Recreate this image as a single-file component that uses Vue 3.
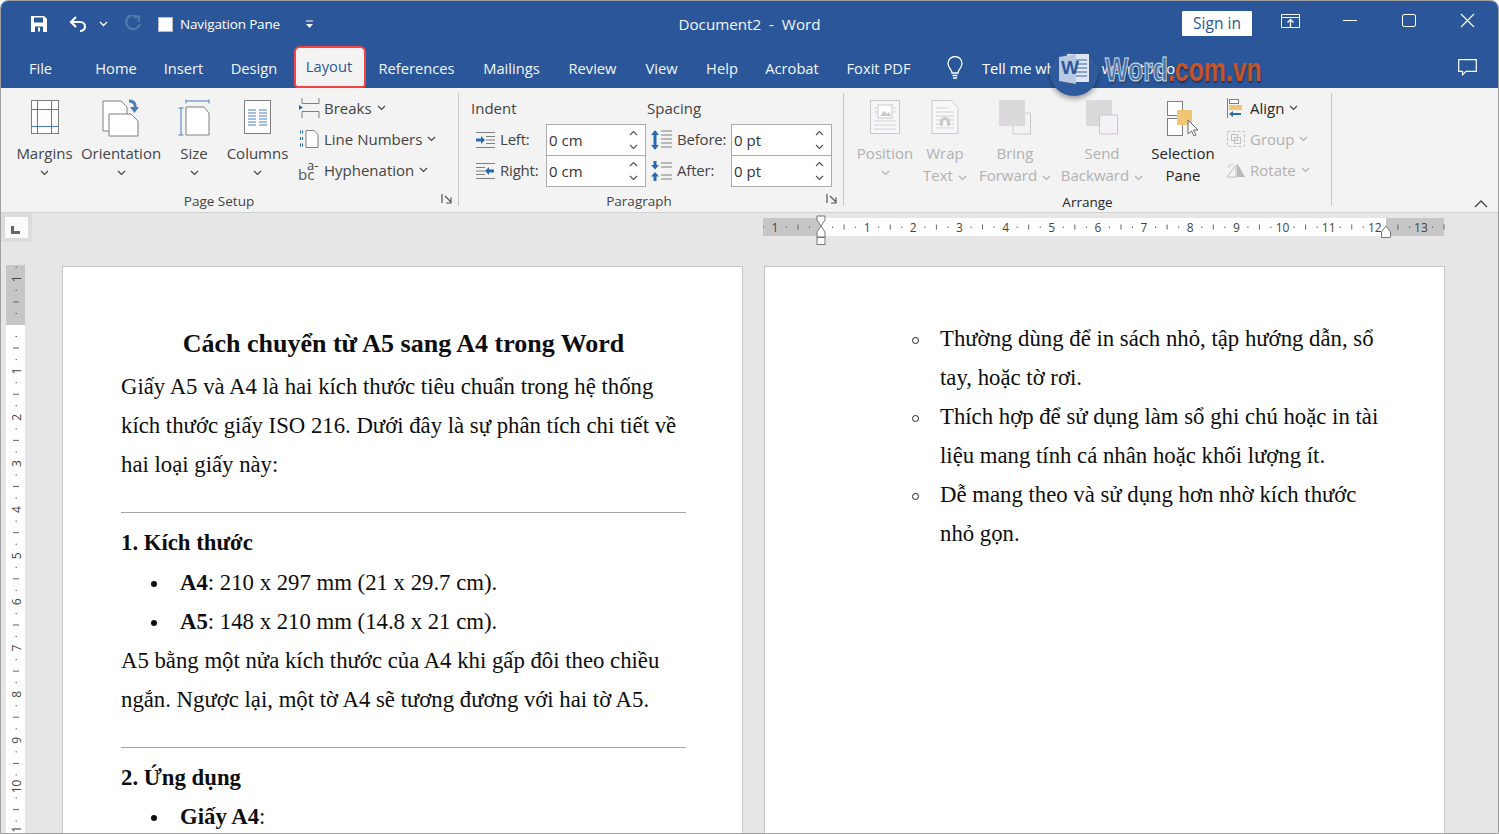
<template>
  <div class="window">
    <header class="titlebar">
      <div class="qat-row">
        <div class="qat">
          <svg class="qat-save" width="18" height="18" viewBox="0 0 18 18"><path d="M1 1h13l3 3v13H1z" fill="#fff"/><rect x="4" y="2.500" width="9" height="5" fill="#2b579a"/><rect x="5" y="11.500" width="8" height="5.500" fill="#2b579a"/><rect x="8" y="12.500" width="2" height="4" fill="#fff"/></svg>
          <svg class="qat-undo" width="20" height="18" viewBox="0 0 20 18"><path d="M8 2 3 7l5 5M3 7h9c3 0 5 2 5 4.500S15 16 12 16" fill="none" stroke="#fff" stroke-width="2.200"/></svg>
          <svg class="qat-chev" width="9" height="6" viewBox="0 0 9 6"><path d="M1 1l3.500 3.500L8 1" fill="none" stroke="#fff" stroke-width="1.300"/></svg>
          <svg class="qat-redo" width="18" height="18" viewBox="0 0 18 18"><path d="M10 2h5v5M14.500 2.500A7 7 0 1 0 16 9" fill="none" stroke="#4f78ad" stroke-width="2.400"/></svg>
          <span class="qat-check"></span>
          <span class="qat-label">Navigation Pane</span>
          <svg class="qat-more" width="9" height="9" viewBox="0 0 9 9"><path d="M1 1h7" stroke="#fff" stroke-width="1"/><path d="M1 4h7L4.500 8z" fill="#fff"/></svg>
        </div>
        <div class="doc-title">Document2&nbsp; -&nbsp; Word</div>
        <div class="win-controls">
          <button class="sign-in">Sign in</button>
          <svg class="ctl-ribbon" width="19" height="14" viewBox="0 0 19 14"><path d="M.5.500h18v13H.5zM.5 3.500h18" fill="none" stroke="#fff"/><path d="M9.500 13V6M6.500 8.500l3-3 3 3" fill="none" stroke="#fff" stroke-width="1.300"/></svg>
          <span class="ctl-min"></span>
          <span class="ctl-max"></span>
          <svg class="ctl-close" width="15" height="15" viewBox="0 0 15 15"><path d="M1 1l13 13M14 1 1 14" stroke="#fff" stroke-width="1.200"/></svg>
        </div>
      </div>
      <nav class="tab-row">
        <span v-for="t in tabs" :key="t.name" class="tab" :class="{ active: t.name === 'Layout' }" :style="{ width: t.w + 'px' }">{{ t.name }}</span>
        <svg class="bulb" width="18" height="24" viewBox="0 0 18 24"><path d="M6 17c0-3-4-5-4-9.500a7 7 0 0 1 14 0C16 12 12 14 12 17z" fill="none" stroke="#fff" stroke-width="1.300"/><path d="M6.500 19.500h5M7 22h4" stroke="#fff" stroke-width="1.500"/></svg>
        <span class="tell-me">Tell me what you want to do</span>
        <svg class="comment" width="19" height="17" viewBox="0 0 19 17"><path d="M.7.700h17.600v11.600H8l-3.500 3.500v-3.500H.7z" fill="none" stroke="#fff" stroke-width="1.200"/></svg>
      </nav>
    </header>

    <!-- logo trang web dan de len anh -->
    <div class="watermark">
      <div class="wm-badge">
        <svg width="32" height="32" viewBox="0 0 32 32"><path d="M9 1h22v28H9z" fill="#dfe6f1"/><path d="M18 7h11M18 11h11M18 15h11M18 19h11M18 23h11" stroke="#6f8fc0" stroke-width="1.600"/><path d="M1 4l17-3v30L1 28z" fill="#b9c9e2"/></svg>
        <span class="wm-w">W</span>
      </div>
      <div class="wm-text"><span class="wm-word">Word</span><span class="wm-com">.com.vn</span></div>
    </div>

    <section class="ribbon">
      <div class="group group-page">
        <div class="group-body">
          <div class="big b-margins">
            <div class="big-icon">
              <svg width="28" height="36" viewBox="0 0 28 36"><rect x=".5" y="1.500" width="27" height="33" fill="#fff" stroke="#7f7f7f"/><path d="M6.500 2v32M20.500 2v32M1 10.500h26M1 27.500h26" stroke="#4a7ebb"/></svg>
            </div>
            <span>Margins</span>
            <svg class="chev low" viewBox="0 0 9 6"><path d="M1 1l3.500 3.500L8 1"/></svg>
          </div>
          <div class="big b-orient">
            <div class="big-icon">
              <svg width="38" height="38" viewBox="0 0 38 38"><path d="M1 2h18l6 6v24H1z" fill="#fff" stroke="#7f7f7f"/><path d="M7 15h22l7 7v15H7z" fill="#fff" stroke="#7f7f7f"/><path d="M27 2c5 0 7 3 6 8" fill="none" stroke="#4a7ebb" stroke-width="3"/><path d="M28 8h9l-4.500 6z" fill="#4a7ebb"/></svg>
            </div>
            <span>Orientation</span>
            <svg class="chev low" viewBox="0 0 9 6"><path d="M1 1l3.500 3.500L8 1"/></svg>
          </div>
          <div class="big b-size">
            <div class="big-icon">
              <svg width="32" height="38" viewBox="0 0 32 38"><path d="M8 8h18l5 6v22H8z" fill="#fff" stroke="#7f7f7f"/><path d="M8 2h23M8 .5v4M31 .5v4M3 9v27M.5 9h5M.5 36h5" stroke="#4a7ebb" fill="none"/></svg>
            </div>
            <span>Size</span>
            <svg class="chev low" viewBox="0 0 9 6"><path d="M1 1l3.500 3.500L8 1"/></svg>
          </div>
          <div class="big b-cols">
            <div class="big-icon">
              <svg width="27" height="36" viewBox="0 0 27 36"><rect x=".5" y="1.500" width="26" height="33" fill="#fff" stroke="#7f7f7f"/><path d="M4 11h8M15 11h8M4 14h8M15 14h8M4 17h8M15 17h8M4 20h8M15 20h8M4 23h8M15 23h8M4 26h8M15 26h8" stroke="#4a7ebb"/></svg>
            </div>
            <span>Columns</span>
            <svg class="chev low" viewBox="0 0 9 6"><path d="M1 1l3.500 3.500L8 1"/></svg>
          </div>
          <div class="small-col page-small">
            <div class="small">
              <svg class="small-icon" width="22" height="20" viewBox="0 0 22 20"><path d="M4 0v5.500h17V0M4 20v-6.500h17V20" fill="none" stroke="#7f7f7f"/><path d="M1 7l4 2.500L1 12z" fill="#2b6cb0"/></svg>
              <span>Breaks</span>
              <svg class="chev" viewBox="0 0 9 6"><path d="M1 1l3.500 3.500L8 1"/></svg>
            </div>
            <div class="small">
              <svg class="small-icon" width="22" height="20" viewBox="0 0 22 20"><path d="M8 1.500h8l4 4v13H8z" fill="#fff" stroke="#7f7f7f"/><path d="M2 3h3M2 9.500h3M2 16h3" stroke="#2b6cb0" stroke-width="3" stroke-dasharray="1 1"/></svg>
              <span>Line Numbers</span>
              <svg class="chev" viewBox="0 0 9 6"><path d="M1 1l3.500 3.500L8 1"/></svg>
            </div>
            <div class="small">
              <span class="hyph-icon"><i>a-</i><b>bc</b></span>
              <span>Hyphenation</span>
              <svg class="chev" viewBox="0 0 9 6"><path d="M1 1l3.500 3.500L8 1"/></svg>
            </div>
          </div>
        </div>
        <div class="group-label">Page Setup</div>
        <svg class="launcher" width="12" height="12" viewBox="0 0 12 12"><path d="M1 1v9M4 3l6 6M10 4.500V10H5" fill="none" stroke="#555" stroke-width="1.200"/></svg>
      </div>

      <div class="group group-para">
        <div class="group-body para">
          <div class="para-col col-indent">
            <div class="para-head">Indent</div>
            <div class="spin-row">
              <svg width="20" height="16" viewBox="0 0 20 16"><path d="M1 .500h19M11 4.500h9M11 8h9M11 11.500h9M1 15.500h19" stroke="#7f7f7f"/><path d="M1 6.500h5V4l4 4-4 4V9.500H1z" fill="#2b6cb0"/></svg>
              <label>Left:</label>
              <div class="spin">0 cm<span class="spin-btns"><svg viewBox="0 0 9 6"><path d="M1 5l3.500-3.500L8 5"/></svg><svg viewBox="0 0 9 6"><path d="M1 1l3.500 3.500L8 1"/></svg></span></div>
            </div>
            <div class="spin-row">
              <svg width="20" height="16" viewBox="0 0 20 16"><path d="M1 .500h19M1 4.500h9M1 8h9M1 11.500h9M1 15.500h19" stroke="#7f7f7f"/><path d="M19 6.500h-5V4l-4 4 4 4V9.500h5z" fill="#2b6cb0"/></svg>
              <label>Right:</label>
              <div class="spin">0 cm<span class="spin-btns"><svg viewBox="0 0 9 6"><path d="M1 5l3.500-3.500L8 5"/></svg><svg viewBox="0 0 9 6"><path d="M1 1l3.500 3.500L8 1"/></svg></span></div>
            </div>
          </div>
          <div class="para-col col-spacing">
            <div class="para-head">Spacing</div>
            <div class="spin-row">
              <svg width="21" height="20" viewBox="0 0 21 20"><path d="M10 1h11M10 5h11M10 9h11M10 13h11M10 17h11" stroke="#7f7f7f"/><path d="M4 0l4 5H5.500v10H8l-4 5-4-5h2.500V5H0z" fill="#2b6cb0"/></svg>
              <label>Before:</label>
              <div class="spin">0 pt<span class="spin-btns"><svg viewBox="0 0 9 6"><path d="M1 5l3.500-3.500L8 5"/></svg><svg viewBox="0 0 9 6"><path d="M1 1l3.500 3.500L8 1"/></svg></span></div>
            </div>
            <div class="spin-row">
              <svg width="21" height="20" viewBox="0 0 21 20"><path d="M10 2h11M10 6h11M10 14h11M10 18h11" stroke="#7f7f7f"/><path d="M2.500 0h3v4H8L4 8.500 0 4h2.500zM4 11l4 4.500H5.500V20h-3v-4.500H0z" fill="#2b6cb0"/></svg>
              <label>After:</label>
              <div class="spin">0 pt<span class="spin-btns"><svg viewBox="0 0 9 6"><path d="M1 5l3.500-3.500L8 5"/></svg><svg viewBox="0 0 9 6"><path d="M1 1l3.500 3.500L8 1"/></svg></span></div>
            </div>
          </div>
        </div>
        <div class="group-label">Paragraph</div>
        <svg class="launcher" width="12" height="12" viewBox="0 0 12 12"><path d="M1 1v9M4 3l6 6M10 4.500V10H5" fill="none" stroke="#555" stroke-width="1.200"/></svg>
      </div>

      <div class="group group-arrange">
        <div class="group-body">
          <div class="big off b-pos">
            <div class="big-icon">
              <svg width="30" height="36" viewBox="0 0 30 36"><rect x=".5" y="1.500" width="29" height="33" fill="#f7f6f8" stroke="#cbc8cc"/><rect x="8" y="6" width="14" height="13" fill="#fff" stroke="#cbc8cc"/><path d="M10 17l4-5 3 3 2-2 2 4z" fill="#cbc8cc"/><path d="M4 9h3M23 9h3M4 13h3M23 13h3M4 22h22M4 26h22M4 30h22" stroke="#d3d1d5"/></svg>
            </div>
            <span>Position</span>
            <svg class="chev low" viewBox="0 0 9 6"><path d="M1 1l3.500 3.500L8 1"/></svg>
          </div>
          <div class="big off b-wrap">
            <div class="big-icon">
              <svg width="28" height="36" viewBox="0 0 28 36"><path d="M1 1.500h19l7 7v26H1z" fill="#f7f6f8" stroke="#cbc8cc"/><path d="M5 9h12M5 13h18M5 17h18M5 21h5M18 21h5M5 25h4M19 25h4M5 29h18" stroke="#d3d1d5"/><path d="M9 27v-4a5 5 0 0 1 10 0v4h-3v-4a2 2 0 0 0-4 0v4z" fill="#cbc8cc"/></svg>
            </div>
            <span>Wrap</span>
            <span>Text<svg class="chev" viewBox="0 0 9 6"><path d="M1 1l3.500 3.500L8 1"/></svg></span>
          </div>
          <div class="big off b-bring">
            <div class="big-icon">
              <svg width="32" height="36" viewBox="0 0 32 36"><path d="M14 14h17.500v21H14z" fill="#f3f3f3" stroke="#cbc8cc"/><rect x="0" y="1" width="26" height="26" fill="#dcd9dc"/></svg>
            </div>
            <span>Bring</span>
            <span>Forward<svg class="chev" viewBox="0 0 9 6"><path d="M1 1l3.500 3.500L8 1"/></svg></span>
          </div>
          <div class="big off b-send">
            <div class="big-icon">
              <svg width="32" height="36" viewBox="0 0 32 36"><rect x="0" y="1" width="26" height="26" fill="#dcd9dc"/><path d="M13.500 16h18v19h-18z" fill="#f4f1f6" stroke="#cbc8cc"/></svg>
            </div>
            <span>Send</span>
            <span>Backward<svg class="chev" viewBox="0 0 9 6"><path d="M1 1l3.500 3.500L8 1"/></svg></span>
          </div>
          <div class="big dark b-sel">
            <div class="big-icon">
              <svg width="32" height="38" viewBox="0 0 32 38"><rect x=".5" y="2.500" width="15" height="14" fill="#fff" stroke="#7f7f7f"/><rect x=".5" y="19.500" width="15" height="17" fill="#fff" stroke="#7f7f7f"/><rect x="10" y="11" width="15" height="15" fill="#f0c674"/><path d="M21 21v14l3.500-3 2.500 5 2-1-2.500-5H31z" fill="#fff" stroke="#666"/></svg>
            </div>
            <span>Selection</span>
            <span>Pane</span>
          </div>
          <div class="small-col arrange-small">
            <div class="small dark">
              <svg class="small-icon" width="20" height="20" viewBox="0 0 20 20"><path d="M1.500 0v20" stroke="#7f7f7f"/><rect x="3.500" y="1.500" width="9" height="4" fill="#fff" stroke="#7f7f7f"/><rect x="3" y="7" width="13" height="5" fill="#f0c674"/><path d="M3 16l4-3v2h8v2H7v2z" fill="#2b6cb0"/></svg>
              <span>Align</span>
              <svg class="chev" viewBox="0 0 9 6"><path d="M1 1l3.500 3.500L8 1"/></svg>
            </div>
            <div class="small off">
              <svg class="small-icon" width="20" height="20" viewBox="0 0 20 20"><path d="M1.500 2.500h17v15h-17z" fill="none" stroke="#c0bfc2" stroke-dasharray="3 2"/><rect x="5.500" y="5.500" width="6" height="6" fill="none" stroke="#c0bfc2"/><rect x="8.500" y="8.500" width="6" height="6" fill="none" stroke="#c0bfc2"/></svg>
              <span>Group</span>
              <svg class="chev" viewBox="0 0 9 6"><path d="M1 1l3.500 3.500L8 1"/></svg>
            </div>
            <div class="small off">
              <svg class="small-icon" width="20" height="20" viewBox="0 0 20 20"><path d="M1 17L10 5v12z" fill="none" stroke="#c0bfc2"/><path d="M11 3l8 14h-8z" fill="#b9b8bb"/><path d="M2 8c1-3 3-4 5-4" fill="none" stroke="#c0bfc2"/></svg>
              <span>Rotate</span>
              <svg class="chev" viewBox="0 0 9 6"><path d="M1 1l3.500 3.500L8 1"/></svg>
            </div>
          </div>
        </div>
        <div class="group-label dark-label">Arrange</div>
      </div>

      <svg class="collapse" width="14" height="9" viewBox="0 0 14 9"><path d="M1 8l6-6 6 6" fill="none" stroke="#444" stroke-width="1.300"/></svg>
    </section>

    <main class="doc-area">
      <div class="ruler-row">
        <div class="tab-stop"><span class="tab-box"><i></i></span></div>
        <svg class="h-ruler" width="684" height="32" viewBox="0 0 684 32">
          <rect x="0" y="5" width="58" height="18" fill="#c6c6c6"/>
          <rect x="58" y="5" width="565" height="18" fill="#fff"/>
          <rect x="623" y="5" width="58" height="18" fill="#c6c6c6"/>
          <template v-for="k in hTicks" :key="k.x">
            <text v-if="k.n" :x="k.x" y="18.500" class="rule-num" text-anchor="middle">{{ k.n }}</text>
            <path v-else-if="k.half" :d="`M${k.x} 11.500v5`" stroke="#666"/>
            <path v-else :d="`M${k.x} 13.500v1.500`" stroke="#666"/>
          </template>
          <path d="M54 3h8v4l-4 6-4-6z" fill="#fff" stroke="#777"/>
          <path d="M58 13l4 6v5h-8v-5z" fill="#fff" stroke="#777"/>
          <rect x="54" y="24.500" width="8" height="7" fill="#fff" stroke="#777"/>
          <path d="M623 13l4.500 6v5.500h-9V19z" fill="#fff" stroke="#777"/>
        </svg>
      </div>
      <div class="doc-row">
        <svg class="v-ruler" width="19" height="572" viewBox="0 0 19 572">
          <rect x="0" y="0" width="19" height="60" fill="#c6c6c6"/>
          <rect x="0" y="60" width="19" height="512" fill="#fff"/>
          <template v-for="k in vTicks" :key="k.y">
            <text v-if="k.n" x="0" y="0" class="rule-num" text-anchor="middle" :transform="`translate(14.500 ${k.y}) rotate(-90)`">{{ k.n }}</text>
            <path v-else-if="k.half" :d="`M7 ${k.y}h6`" stroke="#666"/>
            <path v-else :d="`M9.500 ${k.y}h1.500`" stroke="#666"/>
          </template>
        </svg>
        <div class="pages">
          <article class="page page-one">
            <h1>Cách chuyển từ A5 sang A4 trong Word</h1>
            <p>Giấy A5 và A4 là hai kích thước tiêu chuẩn trong hệ thống kích thước giấy ISO 216. Dưới đây là sự phân tích chi tiết về hai loại giấy này:</p>
            <hr>
            <h2>1. Kích thước</h2>
            <ul>
              <li><div><b>A4</b>: 210 x 297 mm (21 x 29.7 cm).</div></li>
              <li><div><b>A5</b>: 148 x 210 mm (14.8 x 21 cm).</div></li>
            </ul>
            <p>A5 bằng một nửa kích thước của A4 khi gấp đôi theo chiều ngắn. Ngược lại, một tờ A4 sẽ tương đương với hai tờ A5.</p>
            <hr>
            <h2>2. Ứng dụng</h2>
            <ul>
              <li><div><b>Giấy A4</b>:</div></li>
            </ul>
          </article>
          <article class="page page-two">
            <ul class="circles">
              <li><div>Thường dùng để in sách nhỏ, tập hướng dẫn, sổ tay, hoặc tờ rơi.</div></li>
              <li><div>Thích hợp để sử dụng làm sổ ghi chú hoặc in tài liệu mang tính cá nhân hoặc khối lượng ít.</div></li>
              <li><div>Dễ mang theo và sử dụng hơn nhờ kích thước nhỏ gọn.</div></li>
            </ul>
          </article>
        </div>
      </div>
    </main>
  </div>
</template>

<script setup>
const tabs = [
  { name: 'File', w: 55 },
  { name: 'Home', w: 68 },
  { name: 'Insert', w: 67 },
  { name: 'Design', w: 74 },
  { name: 'Layout', w: 72 },
  { name: 'References', w: 101 },
  { name: 'Mailings', w: 89 },
  { name: 'Review', w: 73 },
  { name: 'View', w: 65 },
  { name: 'Help', w: 56 },
  { name: 'Acrobat', w: 84 },
  { name: 'Foxit PDF', w: 89 }
]

const CM = 46.15

// vach chia thuoc: so o moi cm, vach dai o nua cm, cham o 1/4
function buildTicks(zero, from, to) {
  const out = []
  for (let i = from * 4; i <= to * 4; i++) {
    const pos = +(zero + (i / 4) * CM).toFixed(2)
    if (pos < 0) continue
    if (i === 0) continue
    const whole = i % 4 === 0
    out.push({ pos, n: whole ? String(Math.abs(i / 4)) : '', half: i % 4 === 2 || i % 4 === -2 })
  }
  return out
}

const hTicks = buildTicks(58, -1.25, 13.5).map(t => ({ ...t, x: t.pos }))
const vTicks = buildTicks(60, -1.25, 11).map(t => ({ ...t, y: t.pos }))
</script>

<style>
html, body {
  margin: 0;
  overflow: hidden;
  background: #fff;
}
</style>

<style scoped>
.window {
  position: relative;
  box-sizing: border-box;
  width: 1499px;
  height: 834px;
  overflow: hidden;
  border: 1px solid #a0a0a0;
  border-radius: 8px 8px 0 0;
  background: #e6e6e6;
  font-family: "Open Sans", "Noto Sans", sans-serif;
  font-size: 15px;
  color: #444;
}

/* thanh tieu de */
.titlebar {
  height: 87px;
  background: #2b579a;
  color: #fff;
}

.qat-row {
  display: grid;
  grid-template-columns: 1fr auto 1fr;
  align-items: center;
  height: 46px;
}

.qat {
  display: flex;
  align-items: center;
}

.qat-save { margin-left: 29px; }
.qat-undo { margin-left: 20px; }
.qat-chev { margin-left: 11px; }
.qat-redo { margin-left: 16px; }

.qat-check {
  width: 15px;
  height: 15px;
  margin-left: 16px;
  background: #fff;
  border: 1px solid #bbb;
  box-sizing: border-box;
}

.qat-label {
  margin-left: 7px;
  font-size: 13.500px;
  letter-spacing: -0.15px;
}

.qat-more { margin-left: 25px; }

.doc-title {
  font-size: 15.200px;
  color: #f2f5fa;
}

.win-controls {
  display: flex;
  align-items: center;
  justify-content: flex-end;
  padding-bottom: 3px;
}

.sign-in {
  width: 70px;
  height: 25px;
  padding: 0;
  margin-top: 1px;
  border: 0;
  border-radius: 1px;
  background: #fff;
  color: #2b579a;
  font: 15.500px "Open Sans", sans-serif;
}

.ctl-ribbon { margin-left: 29px; margin-bottom: 4px; }

.ctl-min {
  width: 14px;
  height: 1px;
  margin-left: 43px;
  margin-bottom: 5px;
  background: #fff;
}

.ctl-max {
  width: 14px;
  height: 13px;
  margin-left: 45px;
  margin-bottom: 5px;
  border: 1px solid #fff;
  border-radius: 2px;
  box-sizing: border-box;
}

.ctl-close { margin-left: 44px; margin-right: 23px; margin-bottom: 4px; }

.tab-row {
  display: flex;
  align-items: center;
  height: 41px;
  padding-left: 12px;
}

.tab {
  flex: none;
  text-align: center;
  font-size: 14.700px;
  color: #f2f5fa;
  line-height: 38px;
}

.tab:nth-child(2) { margin-left: 14px; }

.tab.active {
  box-sizing: border-box;
  align-self: flex-start;
  height: 42px;
  margin-left: 3px;
  margin-top: -1px;
  padding-right: 2px;
  border: 2.500px solid #f44545;
  border-radius: 6px 6px 4px 4px;
  background: #f3f3f3;
  color: #2b579a;
  line-height: 37px;
}

.bulb { margin-left: 23px; }

.tell-me {
  margin-left: 18px;
  font-size: 14.700px;
  line-height: 38px;
  white-space: nowrap;
}

.comment { margin-left: auto; margin-right: 21px; }

/* watermark */
.watermark {
  position: absolute;
  left: 1049px;
  top: 49px;
  z-index: 5;
  display: flex;
  pointer-events: none;
}

.wm-badge {
  position: relative;
  width: 48px;
  height: 46px;
  border-radius: 50%;
  background: #2f5a9b;
  box-shadow: 0 3px 5px rgba(0, 0, 0, 0.35);
  display: flex;
  align-items: flex-start;
  justify-content: center;
  padding-top: 3px;
  box-sizing: border-box;
}

.wm-w {
  position: absolute;
  left: 11px;
  top: 7px;
  font: bold 19px "Liberation Sans", sans-serif;
  color: #2b579a;
}

.wm-text {
  margin-left: 7px;
  margin-top: 1px;
  font: bold 34px/36px "Liberation Sans", sans-serif;
  transform: scaleX(0.73);
  transform-origin: left center;
  white-space: nowrap;
  text-shadow: 1px 2px 2px rgba(0, 0, 0, 0.4);
}

.wm-word {
  color: #4a72a8;
  -webkit-text-stroke: 1px #d6e0ee;
}

.wm-com { color: #c4542c; }

/* ribbon */
.ribbon {
  position: relative;
  display: flex;
  height: 125px;
  box-sizing: border-box;
  background: #f3f3f3;
  border-bottom: 1px solid #d2d2d2;
}

.group {
  position: relative;
  flex: none;
  height: 113px;
  margin-top: 5px;
  border-right: 1px solid #c6c6c6;
  box-sizing: border-box;
}

.group-page { width: 458px; }
.group-para { width: 385px; }
.group-arrange { width: 488px; }

.group-body {
  display: flex;
  height: 98px;
}

.group-label {
  height: 15px;
  line-height: 20px;
  text-align: center;
  font-size: 13.500px;
  color: #444;
}

.group-page .group-label { padding-right: 21px; }
.group-para .group-label { padding-right: 24px; }

.dark-label {
  color: #262626;
  line-height: 22px;
}

.launcher {
  position: absolute;
  right: 5px;
  bottom: 1px;
}

.big {
  flex: none;
  display: flex;
  flex-direction: column;
  align-items: center;
  line-height: 22px;
  white-space: nowrap;
}

.big-icon {
  display: flex;
  justify-content: center;
  align-items: flex-start;
  height: 49px;
  padding-top: 6px;
  box-sizing: border-box;
}

.b-margins { width: 73px; margin-left: 7px; }
.b-orient { width: 80px; }
.b-size { width: 66px; }
.b-cols { width: 61px; }

.b-pos { width: 60px; margin-left: 11px; }
.b-wrap { width: 60px; }
.b-bring { width: 80px; }
.b-send { width: 94px; }
.b-sel { width: 68px; }

.chev {
  width: 9px;
  height: 6px;
  margin-left: 5px;
  fill: none;
  stroke: #444;
  stroke-width: 1.2;
}

.chev.low {
  margin-left: 0;
  margin-top: 6px;
}

.off { color: #b1b1b1; }
.off .chev { stroke: #b1b1b1; }
.dark { color: #262626; }

.small-col {
  display: flex;
  flex-direction: column;
}

.page-small { margin-left: 10px; }
.arrange-small { margin-left: 9px; }

.small {
  display: flex;
  align-items: center;
  box-sizing: border-box;
  height: 31px;
  padding-bottom: 2px;
  white-space: nowrap;
}

.small-icon {
  flex: none;
  margin-right: 4px;
}

.hyph-icon {
  position: relative;
  flex: none;
  width: 26px;
  height: 22px;
}

.hyph-icon i,
.hyph-icon b {
  position: absolute;
  font-style: normal;
  font-weight: 400;
  line-height: 1;
}

.hyph-icon i { left: 9px; top: 0; font-size: 13px; }
.hyph-icon b { left: 0; top: 8px; font-size: 15px; color: #555; }

/* paragraph */
.para { padding-left: 12px; }

.col-indent { width: 176px; flex: none; }
.col-spacing { width: 185px; flex: none; }

.para-head {
  height: 31px;
  line-height: 31px;
}

.spin-row {
  display: grid;
  align-items: center;
  height: 31px;
}

.col-indent .spin-row { grid-template-columns: 29px 46px 100px; }
.col-spacing .spin-row { grid-template-columns: 30px 54px 101px; }

.spin-row > svg { margin-left: 4px; }

.spin-row label {
  margin-top: -2px;
  letter-spacing: -0.2px;
}

.spin {
  display: flex;
  align-items: center;
  justify-content: space-between;
  box-sizing: border-box;
  height: 32px;
  padding-left: 2px;
  border: 1px solid #ababab;
  background: #fff;
  color: #333;
}

.spin-btns {
  display: flex;
  flex-direction: column;
  gap: 8px;
  margin-right: 7px;
}

.spin-btns svg {
  display: block;
  width: 9px;
  height: 6px;
  fill: none;
  stroke: #555;
  stroke-width: 1.2;
}

.collapse {
  position: absolute;
  right: 10px;
  bottom: 4px;
}

/* vung tai lieu */
.ruler-row {
  display: flex;
  height: 53px;
}

.tab-stop {
  flex: none;
  width: 31px;
  height: 29px;
  background: #dcdcdc;
  box-sizing: border-box;
  padding: 4px 4px;
}

.tab-box {
  display: block;
  width: 23px;
  height: 21px;
  background: #fafafa;
  position: relative;
}

.tab-box i {
  position: absolute;
  left: 6px;
  top: 9px;
  width: 9px;
  height: 8px;
  box-sizing: border-box;
  border-left: 3px solid #666;
  border-bottom: 3px solid #666;
}

.h-ruler {
  margin-left: 731px;
  flex: none;
}

.doc-row {
  display: flex;
  align-items: flex-start;
}

.v-ruler {
  flex: none;
  margin-left: 5px;
  margin-top: -1px;
}

.rule-num {
  font-family: "Open Sans", sans-serif;
  font-size: 12px;
  fill: #444;
}

.pages {
  display: flex;
  gap: 21px;
  margin-left: 37px;
}

.page {
  flex: none;
  box-sizing: border-box;
  width: 681px;
  height: 800px;
  background: #fff;
  border: 1px solid #c6c6c6;
  font-family: "Liberation Serif", "Times New Roman", serif;
  font-size: 22.750px;
  line-height: 39.150px;
  color: #0d0d0d;
}

.page-one { padding: 53px 56px 0 58px; }
.page-two { padding: 51.500px 59px 0 0; }

h1 {
  margin: 0;
  font-size: 26px;
  line-height: 47px;
  text-align: center;
}

h2 {
  margin: 0;
  font-size: 22.750px;
  line-height: 39.150px;
}

p { margin: 0; }

hr {
  height: 1px;
  margin: 27.500px 0 10.500px;
  border: 0;
  background: #a6a6a6;
}

ul {
  margin: 0;
  padding: 0;
  list-style: none;
}

li {
  display: flex;
}

li::before {
  content: "";
  flex: none;
  width: 6px;
  height: 6px;
  margin: 18px 23px 0 30px;
  border-radius: 50%;
  background: #0d0d0d;
}

.circles li::before {
  box-sizing: border-box;
  width: 7px;
  height: 7px;
  margin: 18px 21px 0 147px;
  background: transparent;
  border: 1px solid #222;
}
</style>
